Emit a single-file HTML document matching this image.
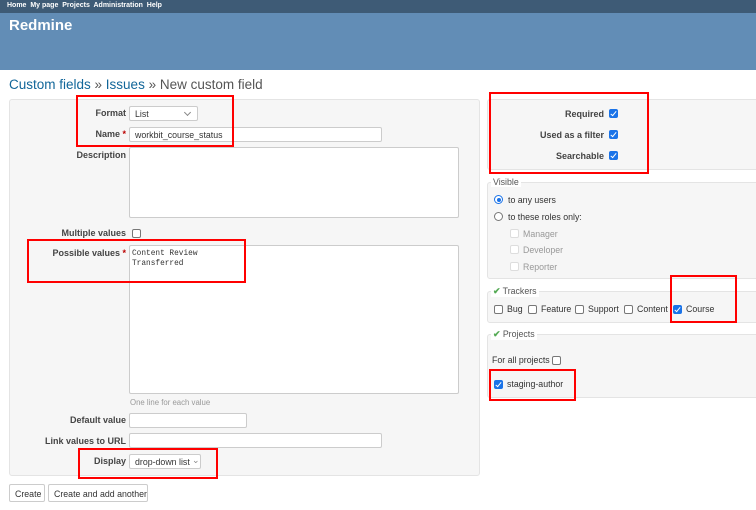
<!DOCTYPE html>
<html><head><meta charset="utf-8"><style>
*{margin:0;padding:0;box-sizing:border-box}
body{width:756px;height:510px;overflow:hidden;background:#fff;font-family:"Liberation Sans",sans-serif;font-size:8.8px;color:#333;position:relative}
.a{position:absolute}
.lbl{position:absolute;font-weight:bold;text-align:right;white-space:nowrap;color:#444;font-size:9px}
.in{position:absolute;background:#fff;border:1px solid #ccc;border-radius:2px}
.cb{position:absolute;width:9px;height:9px;border:1px solid #777;border-radius:2px;background:#fff}
.cc{position:absolute;width:9px;height:9px;border-radius:2px;background:#1a73e8}
.cc:after{content:"";position:absolute;left:3px;top:1px;width:2px;height:5px;border:solid #fff;border-width:0 1.3px 1.3px 0;transform:rotate(40deg)}
.box{position:absolute;background:#f6f6f6;border:1px solid #e4e4e4;border-radius:3px}
.red{position:absolute;border:2px solid #f00}
.t{position:absolute;white-space:nowrap}
.req{color:#b00}
.sel:after{content:"";position:absolute;right:7px;top:3px;width:4px;height:4px;border:solid #888;border-width:0 1px 1px 0;transform:rotate(45deg)}
.grey{color:#999}
.lg{position:absolute;background:#fff;padding:0 2px;white-space:nowrap;color:#555}
.chk{color:#5a5;font-weight:bold}
</style></head><body>
<div class="a" style="left:0;top:0;width:756px;height:13px;background:#3e5b76"></div>
<div class="t" style="left:7px;top:2px;color:#fff;font-weight:bold;font-size:7px">Home&nbsp; My page&nbsp; Projects&nbsp; Administration&nbsp; Help</div>
<div class="a" style="left:0;top:13px;width:756px;height:57px;background:#628db6"></div>
<div class="t" style="left:9px;top:17px;color:#fff;font-weight:bold;font-size:15px">Redmine</div>
<div class="t" style="left:9px;top:77px;font-size:13.5px;color:#555"><span style="color:#169">Custom fields</span> » <span style="color:#169">Issues</span> » New custom field</div>

<div class="box" style="left:9px;top:99px;width:471px;height:377px"></div>
<div class="lbl" style="right:630px;top:108px">Format</div>
<div class="in sel" style="left:129px;top:106px;width:69px;height:15px"><span class="t" style="left:5px;top:2px">List</span></div>
<div class="lbl" style="right:630px;top:129px">Name <span class="req">*</span></div>
<div class="in" style="left:129px;top:127px;width:253px;height:15px"><span class="t" style="left:5px;top:2px">workbit_course_status</span></div>
<div class="lbl" style="right:630px;top:150px">Description</div>
<div class="in" style="left:129px;top:147px;width:330px;height:71px"></div>
<div class="lbl" style="right:630px;top:228px">Multiple values</div>
<div class="cb" style="left:132px;top:229px"></div>
<div class="lbl" style="right:630px;top:248px">Possible values <span class="req">*</span></div>
<div class="in" style="left:129px;top:245px;width:330px;height:149px"><div class="t" style="left:2px;top:3px;font-family:'Liberation Mono',monospace;font-size:7.8px;line-height:10px">Content Review<br>Transferred</div></div>
<div class="t grey" style="left:130px;top:398px;font-size:7.8px">One line for each value</div>
<div class="lbl" style="right:630px;top:415px">Default value</div>
<div class="in" style="left:129px;top:413px;width:118px;height:15px"></div>
<div class="lbl" style="right:630px;top:436px">Link values to URL</div>
<div class="in" style="left:129px;top:433px;width:253px;height:15px"></div>
<div class="lbl" style="right:630px;top:456px">Display</div>
<div class="in" style="left:129px;top:454px;width:72px;height:15px"><span class="t" style="left:5px;top:2px">drop-down list</span><span class="t" style="left:62px;top:0px;color:#888">⌄</span></div>
<div class="in" style="left:9px;top:484px;width:36px;height:18px"><span class="t" style="left:5px;top:4px">Create</span></div>
<div class="in" style="left:48px;top:484px;width:100px;height:18px"><span class="t" style="left:5px;top:4px">Create and add another</span></div>

<div class="box" style="left:487px;top:99px;width:275px;height:71px"></div>
<div class="lbl" style="right:152px;top:109px">Required</div><div class="cc" style="left:609px;top:109px"></div>
<div class="lbl" style="right:152px;top:130px">Used as a filter</div><div class="cc" style="left:609px;top:130px"></div>
<div class="lbl" style="right:152px;top:151px">Searchable</div><div class="cc" style="left:609px;top:151px"></div>

<div class="box" style="left:487px;top:182px;width:275px;height:97px"></div>
<div class="lg" style="left:491px;top:177px">Visible</div>
<div class="a" style="left:494px;top:195px;width:9px;height:9px;border-radius:50%;border:1px solid #1a73e8;background:#fff"><div class="a" style="left:1.5px;top:1.5px;width:4px;height:4px;border-radius:50%;background:#1a73e8"></div></div>
<div class="t" style="left:508px;top:195px">to any users</div>
<div class="a" style="left:494px;top:212px;width:9px;height:9px;border-radius:50%;border:1px solid #777;background:#fff"></div>
<div class="t" style="left:508px;top:212px">to these roles only:</div>
<div class="cb" style="left:510px;top:229px;border-color:#ddd"></div><div class="t grey" style="left:523px;top:229px">Manager</div>
<div class="cb" style="left:510px;top:245px;border-color:#ddd"></div><div class="t grey" style="left:523px;top:245px">Developer</div>
<div class="cb" style="left:510px;top:262px;border-color:#ddd"></div><div class="t grey" style="left:523px;top:262px">Reporter</div>

<div class="box" style="left:487px;top:291px;width:275px;height:32px"></div>
<div class="lg" style="left:491px;top:286px"><span class="chk">✔</span> Trackers</div>
<div class="cb" style="left:494px;top:305px"></div><div class="t" style="left:507px;top:304px">Bug</div>
<div class="cb" style="left:528px;top:305px"></div><div class="t" style="left:541px;top:304px">Feature</div>
<div class="cb" style="left:575px;top:305px"></div><div class="t" style="left:588px;top:304px">Support</div>
<div class="cb" style="left:624px;top:305px"></div><div class="t" style="left:637px;top:304px">Content</div>
<div class="cc" style="left:673px;top:305px"></div><div class="t" style="left:686px;top:304px">Course</div>

<div class="box" style="left:487px;top:334px;width:275px;height:64px"></div>
<div class="lg" style="left:491px;top:329px"><span class="chk">✔</span> Projects</div>
<div class="t" style="left:492px;top:355px">For all projects</div><div class="cb" style="left:552px;top:356px"></div>
<div class="cc" style="left:494px;top:380px"></div><div class="t" style="left:507px;top:379px">staging-author</div>

<div class="red" style="left:76px;top:95px;width:158px;height:52px"></div>
<div class="red" style="left:27px;top:239px;width:219px;height:44px"></div>
<div class="red" style="left:78px;top:448px;width:140px;height:31px"></div>
<div class="red" style="left:489px;top:92px;width:160px;height:82px"></div>
<div class="red" style="left:670px;top:275px;width:67px;height:48px"></div>
<div class="red" style="left:489px;top:369px;width:87px;height:32px"></div>
</body></html>
